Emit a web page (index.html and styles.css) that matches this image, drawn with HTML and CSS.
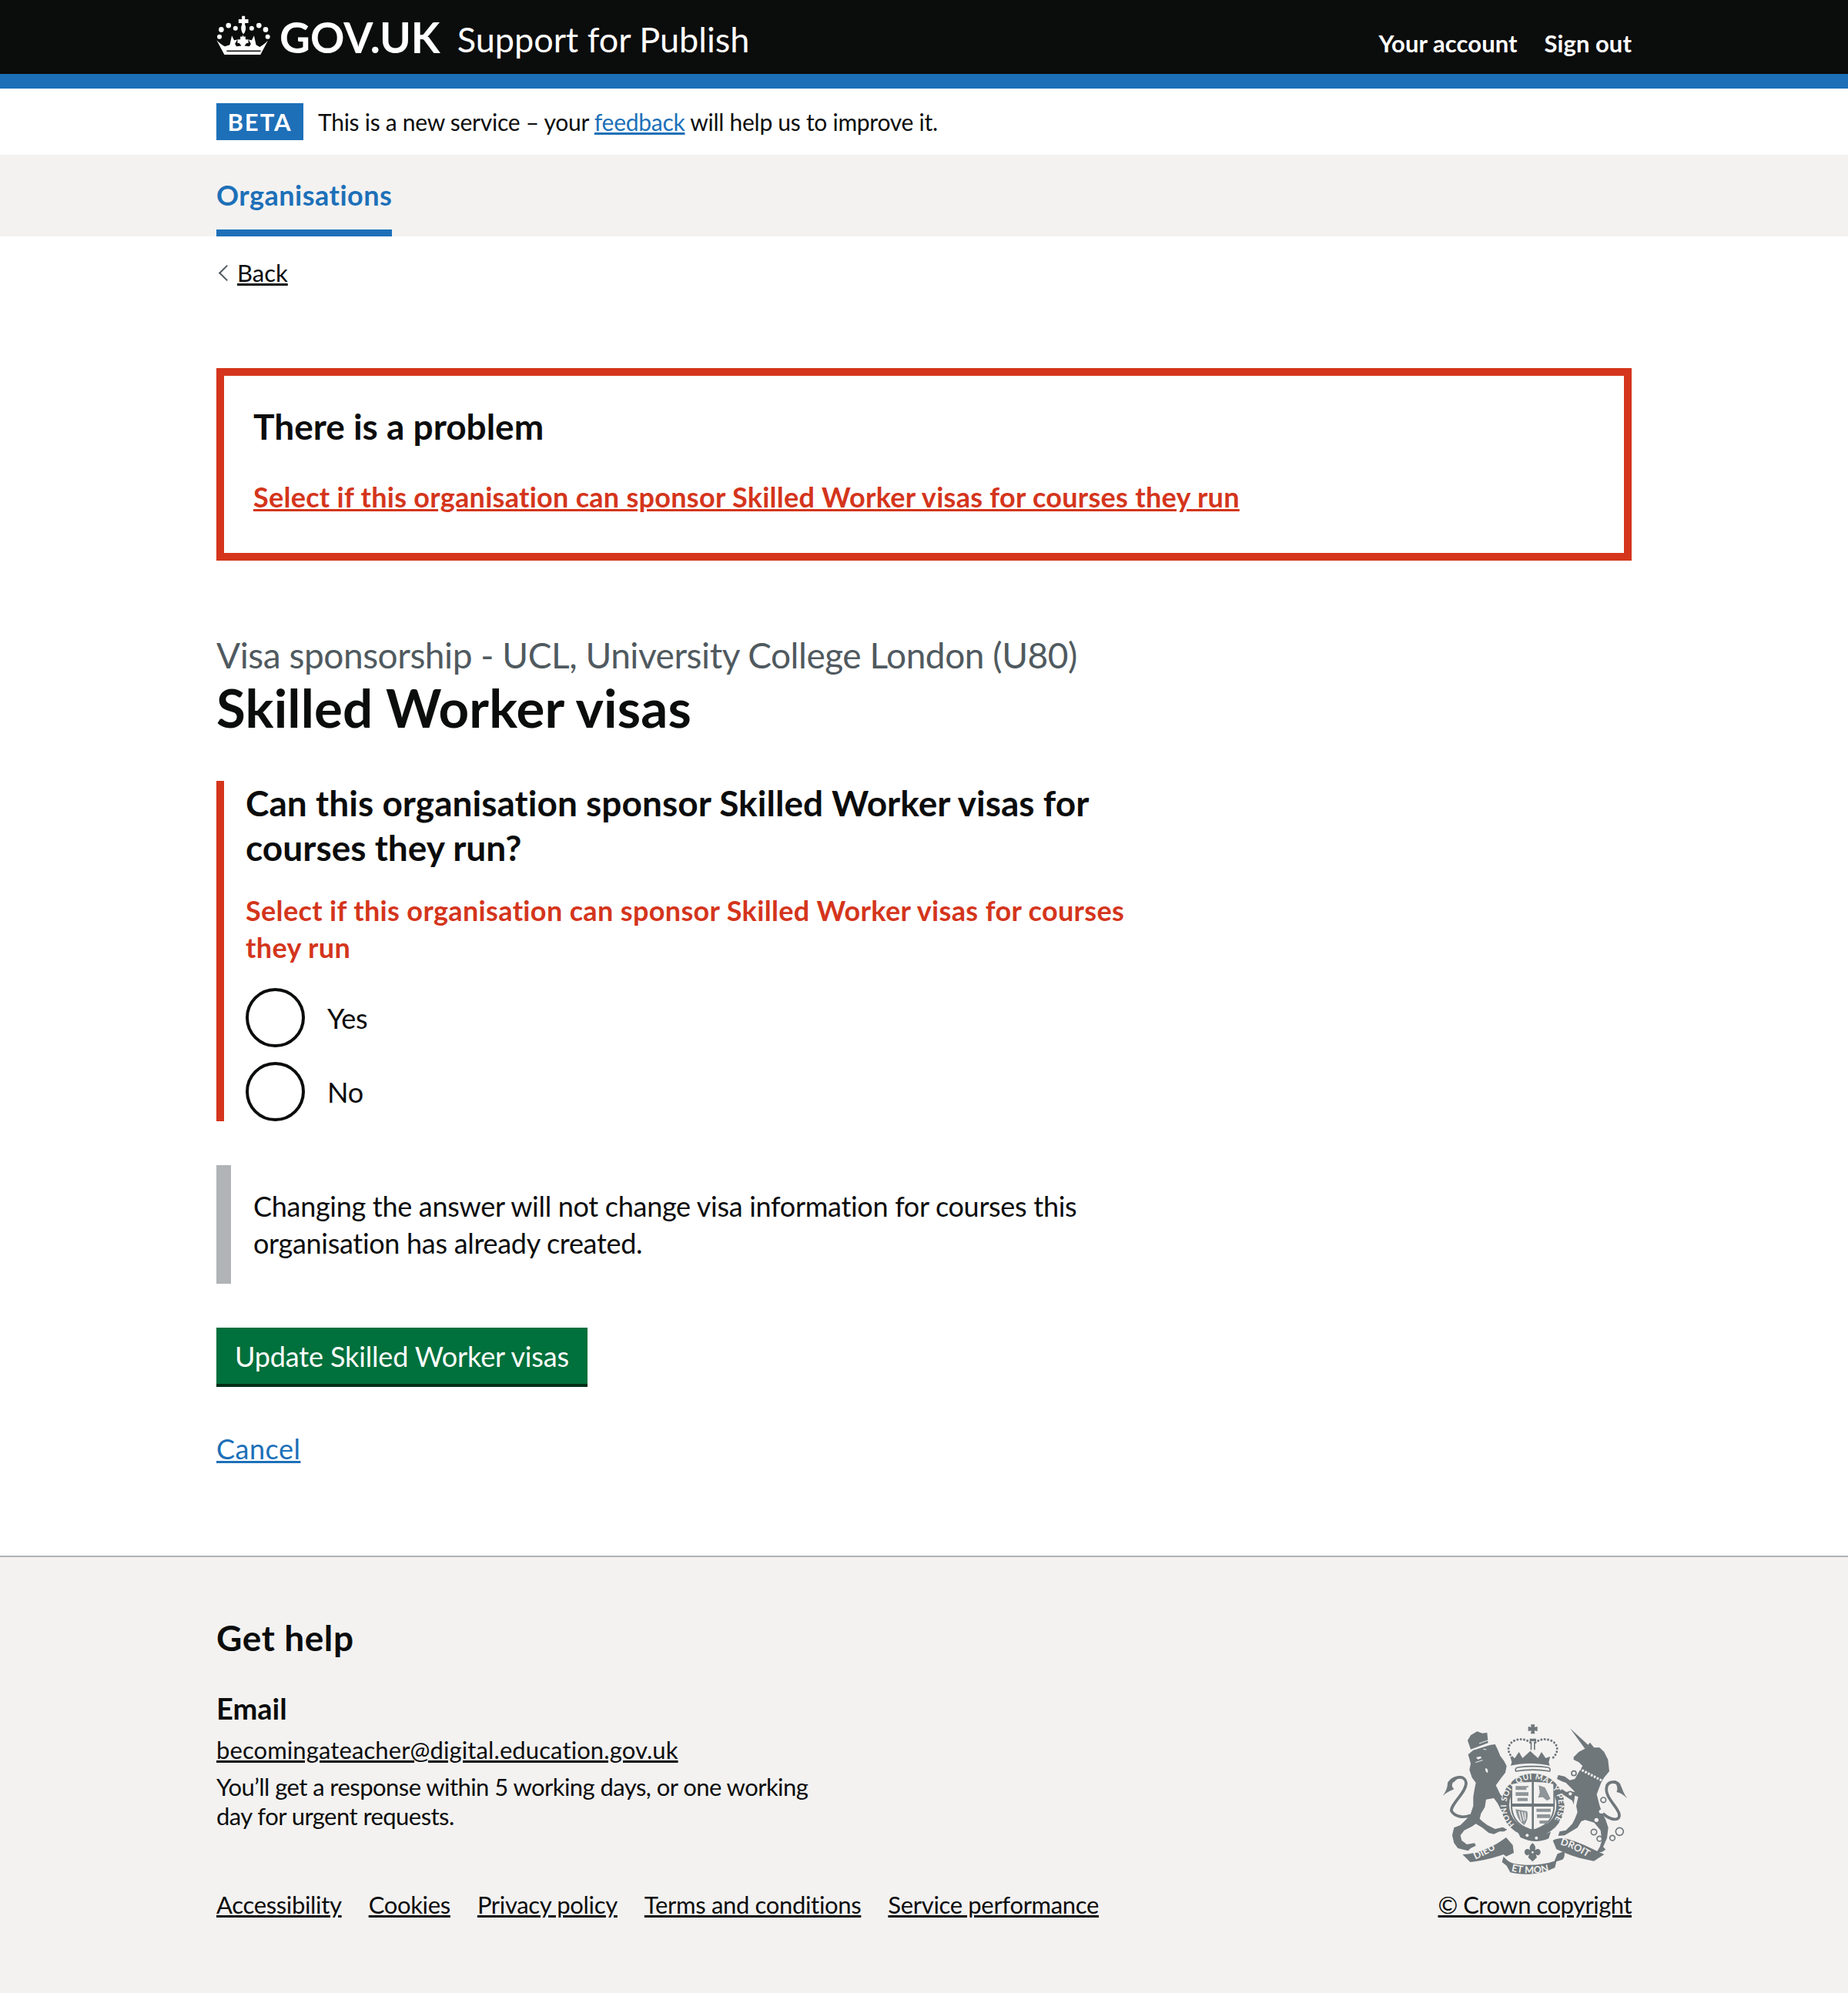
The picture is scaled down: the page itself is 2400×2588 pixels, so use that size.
FILE: index.html
```html
<!DOCTYPE html>
<html lang="en">
<head>
    <meta charset="UTF-8">
    <title>Skilled Worker visas - Support for Publish</title>
    <link rel="stylesheet" href="styles.css">
</head>
<body>
    <header class="site-header">
        <div class="width-container header-inner">
            <a href="#" class="header-logo">
                <svg class="crown" viewBox="30 28 212 152" aria-hidden="true">
                    <g fill="#fff">
                        <path d="M129 30h12v13h13v15h-13v8c6 4 2 30-6 34-8-4-12-30-6-34v-8h-13V43h13z"/>
                        <circle cx="77" cy="67" r="10"/><circle cx="195" cy="67" r="10"/>
                        <circle cx="104" cy="78" r="9"/><circle cx="167" cy="78" r="9"/>
                        <circle cx="49" cy="83" r="10"/><circle cx="221" cy="83" r="10"/>
                        <circle cx="42" cy="111" r="9"/><circle cx="229" cy="111" r="9"/>
                        <path d="M90 106l9 18 12-2-9 16 6 10 19-2-8-11h-7v-14h11v-11h8l3-7 1 7h8v11h11v14h-7l-8 11 19 2 6-10-9-16 12 2 9-18 8 36 14 8c9-4 22-14 32-24l-30 56H62L31 124c10 10 23 20 32 24l19-6z"/>
                    </g>
                    <path d="M70 166h132" stroke="#0b0c0c" stroke-width="4"/>
                </svg>
                <span class="logo-text">GOV.UK</span>
            </a>
            <a href="#" class="service-name">Support for Publish</a>
            <nav class="header-nav">
                <a href="#">Your account</a>
                <a href="#">Sign out</a>
            </nav>
        </div>
    </header>
    <div class="header-stripe"></div>

    <div class="width-container phase-banner">
        <strong class="phase-tag">BETA</strong>
        <span>This is a new service – your <a href="#" class="link">feedback</a> will help us to improve it.</span>
    </div>

    <nav class="primary-nav">
        <div class="width-container">
            <a href="#" class="primary-nav-item">Organisations</a>
        </div>
    </nav>

    <main class="width-container">
        <a href="#" class="back-link">Back</a>

        <div class="error-summary">
            <h2>There is a problem</h2>
            <a href="#">Select if this organisation can sponsor Skilled Worker visas for courses they run</a>
        </div>

        <div class="caption">Visa sponsorship - UCL, University College London (U80)</div>
        <h1>Skilled Worker visas</h1>

        <div class="form-column">
            <div class="form-group">
                <div class="legend">Can this organisation sponsor Skilled Worker visas for courses they run?</div>
                <p class="error-message">Select if this organisation can sponsor Skilled Worker visas for courses they run</p>
                <label class="radio"><span class="radio-circle"></span>Yes</label>
                <label class="radio"><span class="radio-circle"></span>No</label>
            </div>

            <div class="inset-text">Changing the answer will not change visa information for courses this organisation has already created.</div>
        </div>

        <button class="button" type="button">Update Skilled Worker visas</button>
        <a href="#" class="link cancel">Cancel</a>
    </main>

    <footer class="site-footer">
        <div class="width-container footer-inner">
            <div class="footer-left">
                <h2>Get help</h2>
                <h3>Email</h3>
                <a href="#" class="footer-email">becomingateacher@digital.education.gov.uk</a>
                <p>You’ll get a response within 5 working days, or one working day for urgent requests.</p>
                <ul class="footer-links">
                    <li><a href="#">Accessibility</a></li>
                    <li><a href="#">Cookies</a></li>
                    <li><a href="#">Privacy policy</a></li>
                    <li><a href="#">Terms and conditions</a></li>
                    <li><a href="#">Service performance</a></li>
                </ul>
            </div>
            <div class="footer-right">
                <svg class="crest" viewBox="0 0 720 585" aria-hidden="true">
                    <!-- lion -->
                    <g transform="translate(-39 -24)" class="crest-ink">
                        <path d="M150 125l-12-35 12-20 25-15 20 7 19-2 4 40z"/>
                        <path d="M140 145l20-17 65-20 20-3 10 20 10 25 15 20 10 20-5 25-15 20-22 30 17 35 25 30 13 20-8 20-25-5-15-30-15-20-30 5-5 30-15 25-5 20 10 10 20 15 30 15 30-7 17 9-12 8h-18l-22 10-20-5-25-20-25-15-15 10-30 15-15 20 5 20 20 15 30-5 5 10-20 10-10 10-20-5-20-5-15-20-7-30 7-30 25-10 25-25 15-20 10-30v-35l5-30 5-25-15-20-10-30 5-25z"/>
                        <path class="crest-line" d="M148 382c-28 12-60 4-73-17-5-25 60-75 57-110-2-25-37-30-52-5"/>
                        <path d="M108 230c-20-4-38 8-48 25 0 20-8 35-18 50 13-12 28-18 43-25-8-8-10-15-5-25z"/>
                    </g>
                    <path class="crest-gap" d="M130 152l28-9 M144 78l56-20 M160 100l12 2"/>
                    <path class="crest-bg" d="M132 132l18-4 3 7-14 5zM168 175c8-2 12 8 9 17-6-1-10-8-9-17z"/>

                    <!-- unicorn -->
                    <g transform="translate(351 -24)" class="crest-ink">
                        <path d="M147 43l71 65-13 14z"/>
                        <path d="M205 122l20-24 15 20h22l18 17 15 30 5 45-20 25-7 10-7 15-15 40 10 40 10 30 15 30 10 30-5 40-15 35 10 10-15 10h-20l12-20 8-25-5-40-25-30-35-10-15 5-15 25-25 15-25 15-25 2 5-17 25-5 25-25 10-20 10-25-5-25 8-35-13-5-5 35-5-15-30-20-20-15 10-10 15 10h35l-35-35-15-5-20-10 5-15 25 5 20 15 20-5 20-35 10-15-15-15-20-10v-10l20-20z"/>
                        <path class="crest-line" d="M275 375c35 30 70 30 63 0-8-30-58-65-48-105 5-20 35-25 50-5"/>
                        <path d="M318 246c15 0 27 14 36 43 5 10 10 20 16 27-15-14-26-22-42-25 6-10 4-25-10-45z"/>
                    </g>
                    <g transform="translate(351 -24)">
                        <path class="crest-collar" d="M182 200l88 46"/>
                        <circle class="crest-ring" cx="162" cy="218" r="9"/>
                        <circle class="crest-ring" cx="148" cy="298" r="9"/>
                        <circle class="crest-ring" cx="277" cy="322" r="10"/>
                        <circle class="crest-ring" cx="240" cy="447" r="11"/>
                        <circle class="crest-ring" cx="262" cy="473" r="10"/>
                        <circle class="crest-ring" cx="312" cy="470" r="10"/>
                        <circle class="crest-ring" cx="340" cy="445" r="15"/>
                        <circle class="crest-bg" cx="268" cy="367" r="8"/>
                        <circle class="crest-bg" cx="250" cy="400" r="8"/>
                    </g>

                    <!-- royal crown, shield and motto -->
                    <g transform="translate(-99 -54)">
                        <path class="crest-ink" d="M444 58h16l-2 10 12-2v18l-12-2 2 12h-16l2-12-12 2V66l12 2zM443 125h5v32h-5zM456 125h5v32h-5zM440 113h25v10h-25z"/>
                        <g class="crest-dots">
                            <path d="M442 128c-15-12-36-16-60-8-26 10-36 42-8 68M462 128c15-12 36-16 60-8 26 10 36 42 8 68"/>
                        </g>
                        <path class="crest-ink" d="M370 205l-6-22 18 6 16-24 14 24 22-20 8-8 8 8 22 20 14-24 16 24 18-6-6 22 4 14c-40-12-114-12-152 0z"/>
                        <path class="crest-pill" d="M386 240c-4-8 0-14 8-15 40-6 76-6 116 0 8 1 12 7 8 15-40-7-92-7-132 0z"/>

                        <circle class="crest-ink" cx="452" cy="372" r="123"/>
                        <circle class="crest-bg" cx="452" cy="372" r="92"/>
                        <path class="crest-ink" d="M392 474c30 14 86 22 130 2l-8 26c-40 18-76 12-110-4z"/>
                        <circle class="crest-bg" cx="430" cy="490" r="6"/>
                        <circle class="crest-bg" cx="466" cy="500" r="6"/>
                        <path class="crest-ink" d="M366 285c50-12 120-12 172 0v88c0 60-40 88-86 102-46-14-86-42-86-102z"/>
                        <path class="crest-bg" d="M372 290c24-6 50-8 76-8v84h-76zM456 282c26 0 50 2 76 8v76h-76zM372 378h76v88c-38-10-74-36-76-88zM456 378h76c-2 52-38 78-76 88z"/>
                        <g class="crest-mid">
                            <path d="M385 298h50v4l-8 2v9h-42zM385 322h50v14h-50zM392 344h40v12h-40z"/>
                            <path d="M475 295l24 8 8 16 14 28-14 8-16-14-18 2 6-20z"/>
                            <path d="M466 386h56v12h-56zM468 408h52v14h-52zM478 432h34v12h-34z"/>
                            <path d="M385 388l45 8c6 20-2 44-12 54-20-14-30-38-33-62z"/>
                        </g>
                        <path class="crest-stripes" d="M398 396l10 40M410 398l8 36M421 400l2 28"/>

                        <path id="garter" class="crest-none" d="M381 448A102 102 0 1 1 528 440"/>
                        <text class="crest-text crest-garter"><textPath href="#garter" textLength="462">HONI SOIT QUI MAL Y PENSE</textPath></text>

                        <path class="crest-ink" d="M178 564c60-2 120-28 170-66l26 30 4 30-30 14-10-8c-40 14-80 24-130 30z"/>
                        <path class="crest-ink" d="M530 510c14-8 32-10 48-8 50 12 100 38 152 62l-40 26c-50-8-100-24-146-46z"/>
                        <path class="crest-ink" d="M338 572c14 16 26 24 42 28 50 10 110 6 156-10l12-28 26-10c4 12 2 24-6 32l-24 8-6 24c-60 30-130 30-174 18l-14-26-18-14z"/>
                        <path class="crest-ink" d="M451 520c10 8 14 18 9 28 10-10 24-4 22 10-2 10-12 12-18 6l4 12-17 16-17-16 4-12c-6 6-16 4-18-6-2-14 12-20 22-10-5-10-1-20 9-28z"/>
                        <circle class="crest-bg" cx="451" cy="556" r="4"/>

                        <path id="motto-left" class="crest-none" d="M228 584C260 570 295 552 328 530"/>
                        <path id="motto-mid" class="crest-none" d="M368 628C420 642 490 642 538 622"/>
                        <path id="motto-right" class="crest-none" d="M558 526C600 536 640 560 682 586"/>
                        <text class="crest-text crest-motto"><textPath href="#motto-left">DIEU</textPath></text>
                        <text class="crest-text crest-motto"><textPath href="#motto-mid">ET MON</textPath></text>
                        <text class="crest-text crest-motto"><textPath href="#motto-right">DROIT</textPath></text>
                    </g>
                </svg>
                <a href="#" class="copyright">© Crown copyright</a>
            </div>
        </div>
    </footer>
</body>
</html>
```

FILE: styles.css
```css
* {
    box-sizing: border-box;
}

body {
    margin: 0;
    font-family: Lato, "Noto Sans", Arial, sans-serif;
    font-size: 36px;
    line-height: 48px;
    letter-spacing: -0.3px;
    font-variant-ligatures: none;
    color: #0b0c0c;
    background: #fff;
}

a {
    color: inherit;
}

.width-container {
    width: 1838px;
    margin: 0 auto;
}

.link {
    color: #1d70b8;
}

/* header */
.site-header {
    height: 96px;
    background: #0b0c0c;
    color: #fff;
}

.header-inner {
    display: flex;
    align-items: center;
    height: 96px;
}

.header-logo {
    display: flex;
    align-items: center;
    gap: 11px;
    text-decoration: none;
    margin-right: 22px;
}

.crown {
    width: 71px;
    height: 51px;
    margin-bottom: 6px;
}

.logo-text {
    font-size: 55px;
    font-weight: 700;
    line-height: 60px;
    letter-spacing: 0.1px;
}

.service-name {
    padding-top: 5px;
    font-size: 45px;
    letter-spacing: 0;
    text-decoration: none;
}

.header-nav {
    margin-left: auto;
    display: flex;
    gap: 35px;
    padding-top: 16px;
    font-size: 31px;
    font-weight: 700;
    letter-spacing: 0.05px;
}

.header-nav a {
    text-decoration: none;
}

.header-stripe {
    height: 19px;
    background: #1d70b8;
}

/* phase banner */
.phase-banner {
    display: flex;
    align-items: center;
    gap: 19px;
    height: 86px;
    font-size: 30px;
    letter-spacing: -0.27px;
}

.phase-tag {
    height: 48px;
    width: 113px;
    background: #1d70b8;
    color: #fff;
    text-align: center;
    font-size: 31px;
    line-height: 48px;
    letter-spacing: 2px;
}

/* primary nav */
.primary-nav {
    height: 106px;
    background: #f3f2f1;
}

.primary-nav-item {
    display: inline-block;
    height: 106px;
    padding-top: 28px;
    border-bottom: 9px solid #1d70b8;
    color: #1d70b8;
    font-weight: 700;
    letter-spacing: 0.5px;
    text-decoration: none;
}

/* back link */
.back-link {
    display: inline-block;
    position: relative;
    margin-top: 27px;
    padding-left: 27px;
    font-size: 31px;
    line-height: 40px;
    letter-spacing: 0;
}

.back-link::before {
    content: "";
    position: absolute;
    left: 6px;
    top: 13px;
    width: 13px;
    height: 13px;
    border-left: 2px solid #505a5f;
    border-bottom: 2px solid #505a5f;
    transform: rotate(45deg);
}

/* error summary */
.error-summary {
    margin-top: 102px;
    height: 250px;
    padding: 36px 38px 0;
    border: 10px solid #d4351c;
}

.error-summary h2 {
    margin: 0 0 37px;
    font-size: 46px;
    line-height: 60px;
    letter-spacing: 0;
}

.error-summary a {
    color: #d4351c;
    font-weight: 700;
    letter-spacing: 0.28px;
}

.caption {
    margin-top: 94px;
    color: #505a5f;
    font-size: 46px;
    line-height: 58px;
    letter-spacing: -0.45px;
}

h1 {
    margin: 0 0 57px;
    font-size: 69px;
    line-height: 77px;
    letter-spacing: 0.2px;
}

.form-column {
    width: 1207px;
}

.form-group {
    margin: 0 0 57px;
    padding: 0 0 0 28px;
    border-left: 10px solid #d4351c;
}

.legend {
    margin-bottom: 28px;
    font-size: 46px;
    line-height: 58px;
    font-weight: 700;
    letter-spacing: 0.04px;
}

.error-message {
    margin: 0 0 29px;
    color: #d4351c;
    font-weight: 700;
    letter-spacing: 0.35px;
}

.radio {
    display: flex;
    align-items: center;
    gap: 29px;
    margin-top: 19px;
}

.radio-circle {
    width: 77px;
    height: 77px;
    border: 4px solid #0b0c0c;
    border-radius: 50%;
    background: #fff;
}

.inset-text {
    margin-bottom: 57px;
    padding: 29px;
    height: 154px;
    border-left: 19px solid #b1b4b6;
}

.button {
    display: block;
    height: 77px;
    padding: 0 24px;
    border: 0;
    border-bottom: 4px solid #002d18;
    background: #00703c;
    color: #fff;
    font: inherit;
    letter-spacing: -0.15px;
}

.cancel {
    display: inline-block;
    margin-top: 56px;
    letter-spacing: 0.5px;
}

/* footer */
.site-footer {
    margin-top: 115px;
    height: 568px;
    padding-top: 75px;
    background: #f3f2f1;
    border-top: 2px solid #b1b4b6;
    font-size: 31px;
    line-height: 40px;
    letter-spacing: -0.3px;
}

.footer-inner {
    display: flex;
    justify-content: space-between;
}

.footer-left {
    width: 1200px;
}

.footer-left h2 {
    margin: 0 0 37px;
    font-size: 46px;
    line-height: 60px;
    letter-spacing: 0.6px;
}

.footer-left h3 {
    margin: 0 0 10px;
    font-size: 38px;
    line-height: 48px;
    letter-spacing: 0;
}

.footer-email {
    letter-spacing: 0.1px;
}

.footer-left p {
    margin: 9px 0 76px;
    width: 790px;
    line-height: 38px;
    letter-spacing: -0.55px;
}

.footer-links {
    display: flex;
    gap: 35px;
    margin: 0;
    padding: 0;
    list-style: none;
    letter-spacing: -0.33px;
}

.footer-right {
    display: flex;
    flex-direction: column;
    align-items: center;
    justify-content: flex-end;
}

.copyright {
    letter-spacing: -0.5px;
}

/* crest */
.crest {
    width: 240px;
    height: 195px;
    margin-bottom: 20px;
    overflow: visible;
}

.crest-ink {
    fill: #6f777b;
}

.crest-mid {
    fill: #8f9598;
}

.crest-bg {
    fill: #f3f2f1;
}

.crest-none {
    fill: none;
}

.crest-line {
    fill: none;
    stroke: #6f777b;
    stroke-width: 11;
}

.crest-gap {
    fill: none;
    stroke: #f3f2f1;
    stroke-width: 3;
}

.crest-collar {
    fill: none;
    stroke: #f3f2f1;
    stroke-width: 9;
    stroke-dasharray: 8 5;
}

.crest-ring {
    fill: #f3f2f1;
    stroke: #6f777b;
    stroke-width: 5;
}

.crest-dots path {
    fill: none;
    stroke: #6f777b;
    stroke-width: 9;
    stroke-linecap: round;
    stroke-dasharray: 0.1 13;
}

.crest-pill {
    fill: #f3f2f1;
    stroke: #6f777b;
    stroke-width: 5;
}

.crest-stripes {
    fill: none;
    stroke: #f3f2f1;
    stroke-width: 4;
}

.crest-text {
    font-family: Lato, sans-serif;
    font-weight: 700;
    letter-spacing: 0;
    fill: #f3f2f1;
}

.crest-garter {
    font-size: 31px;
}

.crest-motto {
    font-size: 38px;
}
```
